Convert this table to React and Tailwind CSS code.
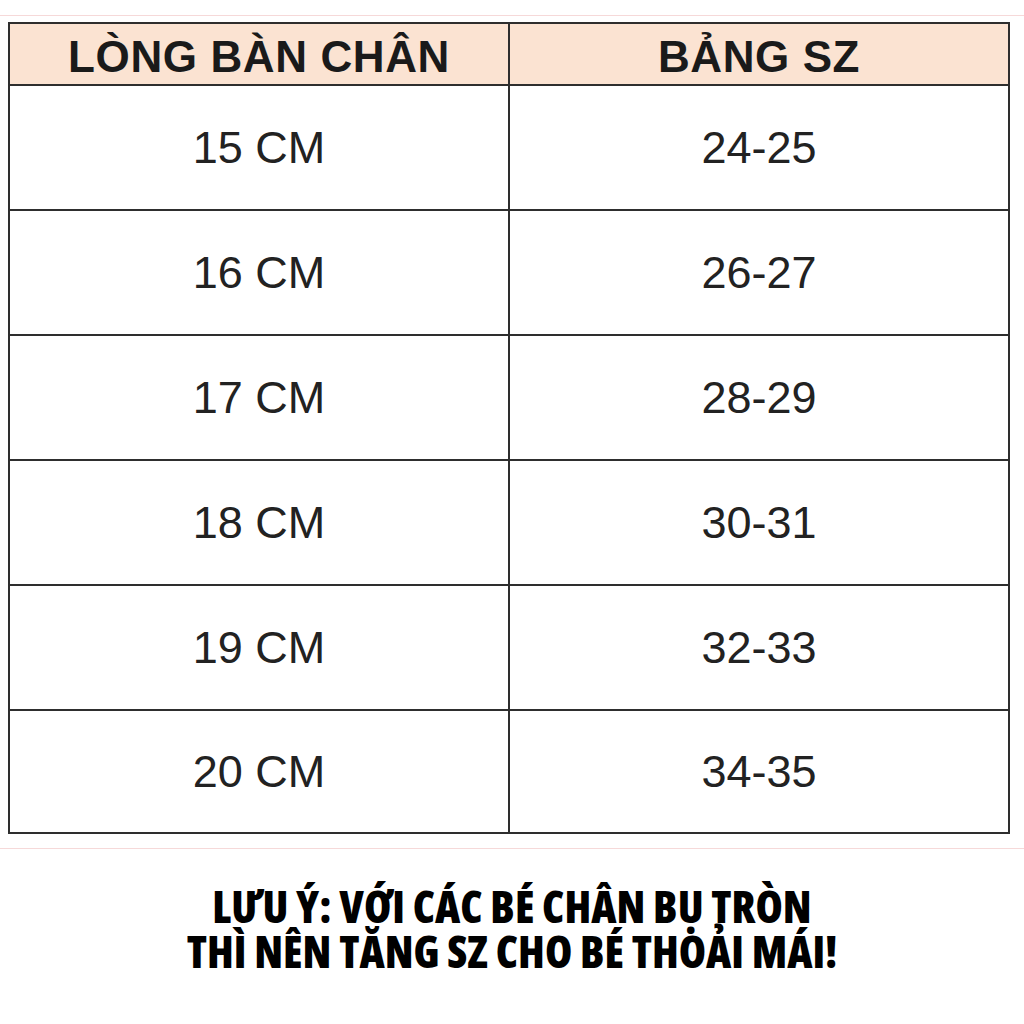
const ROWS = [
  ['15 CM', '24-25'],
  ['16 CM', '26-27'],
  ['17 CM', '28-29'],
  ['18 CM', '30-31'],
  ['19 CM', '32-33'],
  ['20 CM', '34-35'],
]

const arial = { fontFamily: '"Liberation Sans", Arial, sans-serif' }

export default function App() {
  return (
    <div className="relative w-[1024px] h-[1024px] bg-white overflow-hidden" style={arial}>
      {/* spreadsheet hint lines */}
      <div className="absolute left-0 right-0 top-[15px] h-px bg-[#f6d9d9]" />
      <div className="absolute left-0 right-0 top-[848px] h-px bg-[#f6d9d9]" />

      <div className="pt-[22px] pl-[8px]">
        <div className="w-[1002px] border-2 border-[#2e2e2e] text-[#1a1a1a]">
          <div className="grid grid-cols-[500px_1fr] h-[62px] bg-[#fbe3d2] border-b-2 border-[#2e2e2e]">
            <div className="flex items-center justify-center border-r-2 border-[#2e2e2e] text-[44px] font-bold tracking-[0.6px]">
              LÒNG BÀN CHÂN
            </div>
            <div className="flex items-center justify-center text-[44px] font-bold tracking-[0.6px]">
              BẢNG SZ
            </div>
          </div>
          {ROWS.map(([cm, sz], i) => (
            <div
              key={cm}
              className={`grid grid-cols-[500px_1fr] ${i < ROWS.length - 1 ? 'h-[125px] border-b-2 border-[#2e2e2e]' : 'h-[121px]'}`}
            >
              <div className="flex items-center justify-center border-r-2 border-[#2e2e2e] text-[45px] text-[#222]">
                {cm}
              </div>
              <div className="flex items-center justify-center text-[45px] text-[#222]">
                {sz}
              </div>
            </div>
          ))}
        </div>
      </div>

      <div
        className="mt-[50px] flex flex-col items-center text-black font-extrabold text-[44px] leading-[45px]"
        style={{ fontFamily: '"Open Sans", sans-serif', fontStretch: '75%' }}
      >
        <p>LƯU Ý: VỚI CÁC BÉ CHÂN BỤ TRÒN</p>
        <p>THÌ NÊN TĂNG SZ CHO BÉ THOẢI MÁI!</p>
      </div>
    </div>
  )
}
